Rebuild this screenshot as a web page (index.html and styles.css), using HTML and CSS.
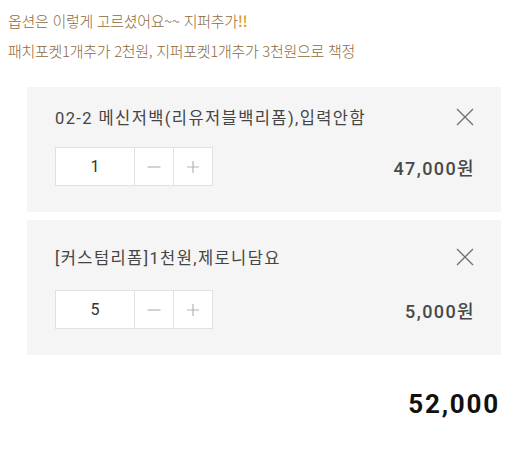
FILE: index.html
```html
<!DOCTYPE html>
<html lang="ko">
<head>
<meta charset="utf-8">
<link rel="stylesheet" href="styles.css">
</head>
<body>
<div class="memo">
  <p class="memo-line">옵션은 이렇게 고르셨어요~~ 지퍼추가<span class="bang">!!</span></p>
  <p class="memo-line">패치포켓1개추가 2천원, 지퍼포켓1개추가 3천원으로 책정</p>
</div>
<div class="cart">
  <div class="item item-first">
    <div class="item-head">
      <span class="name">02-2 메신저백(리유저블백리폼),입력안함</span>
      <span class="remove"><svg width="18" height="18" viewBox="0 0 18 18"><path d="M1 1L17 17M17 1L1 17" stroke="#6f6f6f" stroke-width="1.3" fill="none"/></svg></span>
    </div>
    <div class="item-row">
      <div class="qty">
        <span class="qty-num">1</span>
        <span class="qty-btn"><svg width="14" height="14" viewBox="0 0 14 14"><path d="M0.5 7H13.5" stroke="#b5b5b5" stroke-width="1.2"/></svg></span>
        <span class="qty-btn"><svg width="14" height="14" viewBox="0 0 14 14"><path d="M1 7H13M7 1V13" stroke="#b5b5b5" stroke-width="1.2"/></svg></span>
      </div>
      <span class="price">47,000원</span>
    </div>
  </div>
  <div class="item item-second">
    <div class="item-head">
      <span class="name">[커스텀리폼]1천원,제로니담요</span>
      <span class="remove"><svg width="18" height="18" viewBox="0 0 18 18"><path d="M1 1L17 17M17 1L1 17" stroke="#6f6f6f" stroke-width="1.3" fill="none"/></svg></span>
    </div>
    <div class="item-row">
      <div class="qty">
        <span class="qty-num">5</span>
        <span class="qty-btn"><svg width="14" height="14" viewBox="0 0 14 14"><path d="M0.5 7H13.5" stroke="#b5b5b5" stroke-width="1.2"/></svg></span>
        <span class="qty-btn"><svg width="14" height="14" viewBox="0 0 14 14"><path d="M1 7H13M7 1V13" stroke="#b5b5b5" stroke-width="1.2"/></svg></span>
      </div>
      <span class="price">5,000원</span>
    </div>
  </div>
</div>
<div class="total">52,000</div>
</body>
</html>
```
FILE: styles.css
```css
html, body {
  margin: 0;
  padding: 0;
  background: #ffffff;
}
body {
  font-family: Roboto, "Noto Sans CJK KR", sans-serif;
  color: #333;
}
.memo {
  padding: 6px 0 0 8px;
  font-family: "Noto Sans CJK KR", sans-serif;
  font-weight: 300;
  font-size: 15px;
  letter-spacing: -0.3px;
  color: #8e6a3c;
}
.memo-line {
  margin: 0;
  height: 30px;
  line-height: 30px;
}
.bang {
  color: #d99a1c;
  font-weight: 500;
}
.cart {
  margin: 21px 8px 0 27px;
  display: flex;
  flex-direction: column;
  gap: 8px;
}
.item {
  background: #f5f5f5;
  padding: 18px 27px 26px 28px;
  display: flex;
  flex-direction: column;
  gap: 18px;
}
.item-second {
  padding-top: 25px;
  gap: 21px;
}
.item-head {
  display: flex;
  justify-content: space-between;
  align-items: center;
  height: 24px;
}
.name {
  font-size: 16.5px;
  color: #444;
  letter-spacing: 1.4px;
}
.remove {
  display: flex;
  width: 18px;
  height: 18px;
}
.item-row {
  display: flex;
  justify-content: space-between;
  align-items: center;
}
.qty {
  display: flex;
  height: 39px;
  border: 1px solid #e0e0e0;
  background: #fff;
  box-sizing: border-box;
}
.qty-num {
  width: 78px;
  display: flex;
  align-items: center;
  justify-content: center;
  font-size: 16px;
  color: #333;
}
.qty-btn {
  width: 38px;
  border-left: 1px solid #e0e0e0;
  display: flex;
  align-items: center;
  justify-content: center;
}
.price {
  font-size: 18px;
  font-weight: 500;
  color: #484848;
  letter-spacing: 1.4px;
  margin-right: -1px;
}
.total {
  margin: 34px 9px 0 0;
  text-align: right;
  font-size: 26px;
  font-weight: 700;
  color: #111;
  letter-spacing: 1.8px;
}
```
